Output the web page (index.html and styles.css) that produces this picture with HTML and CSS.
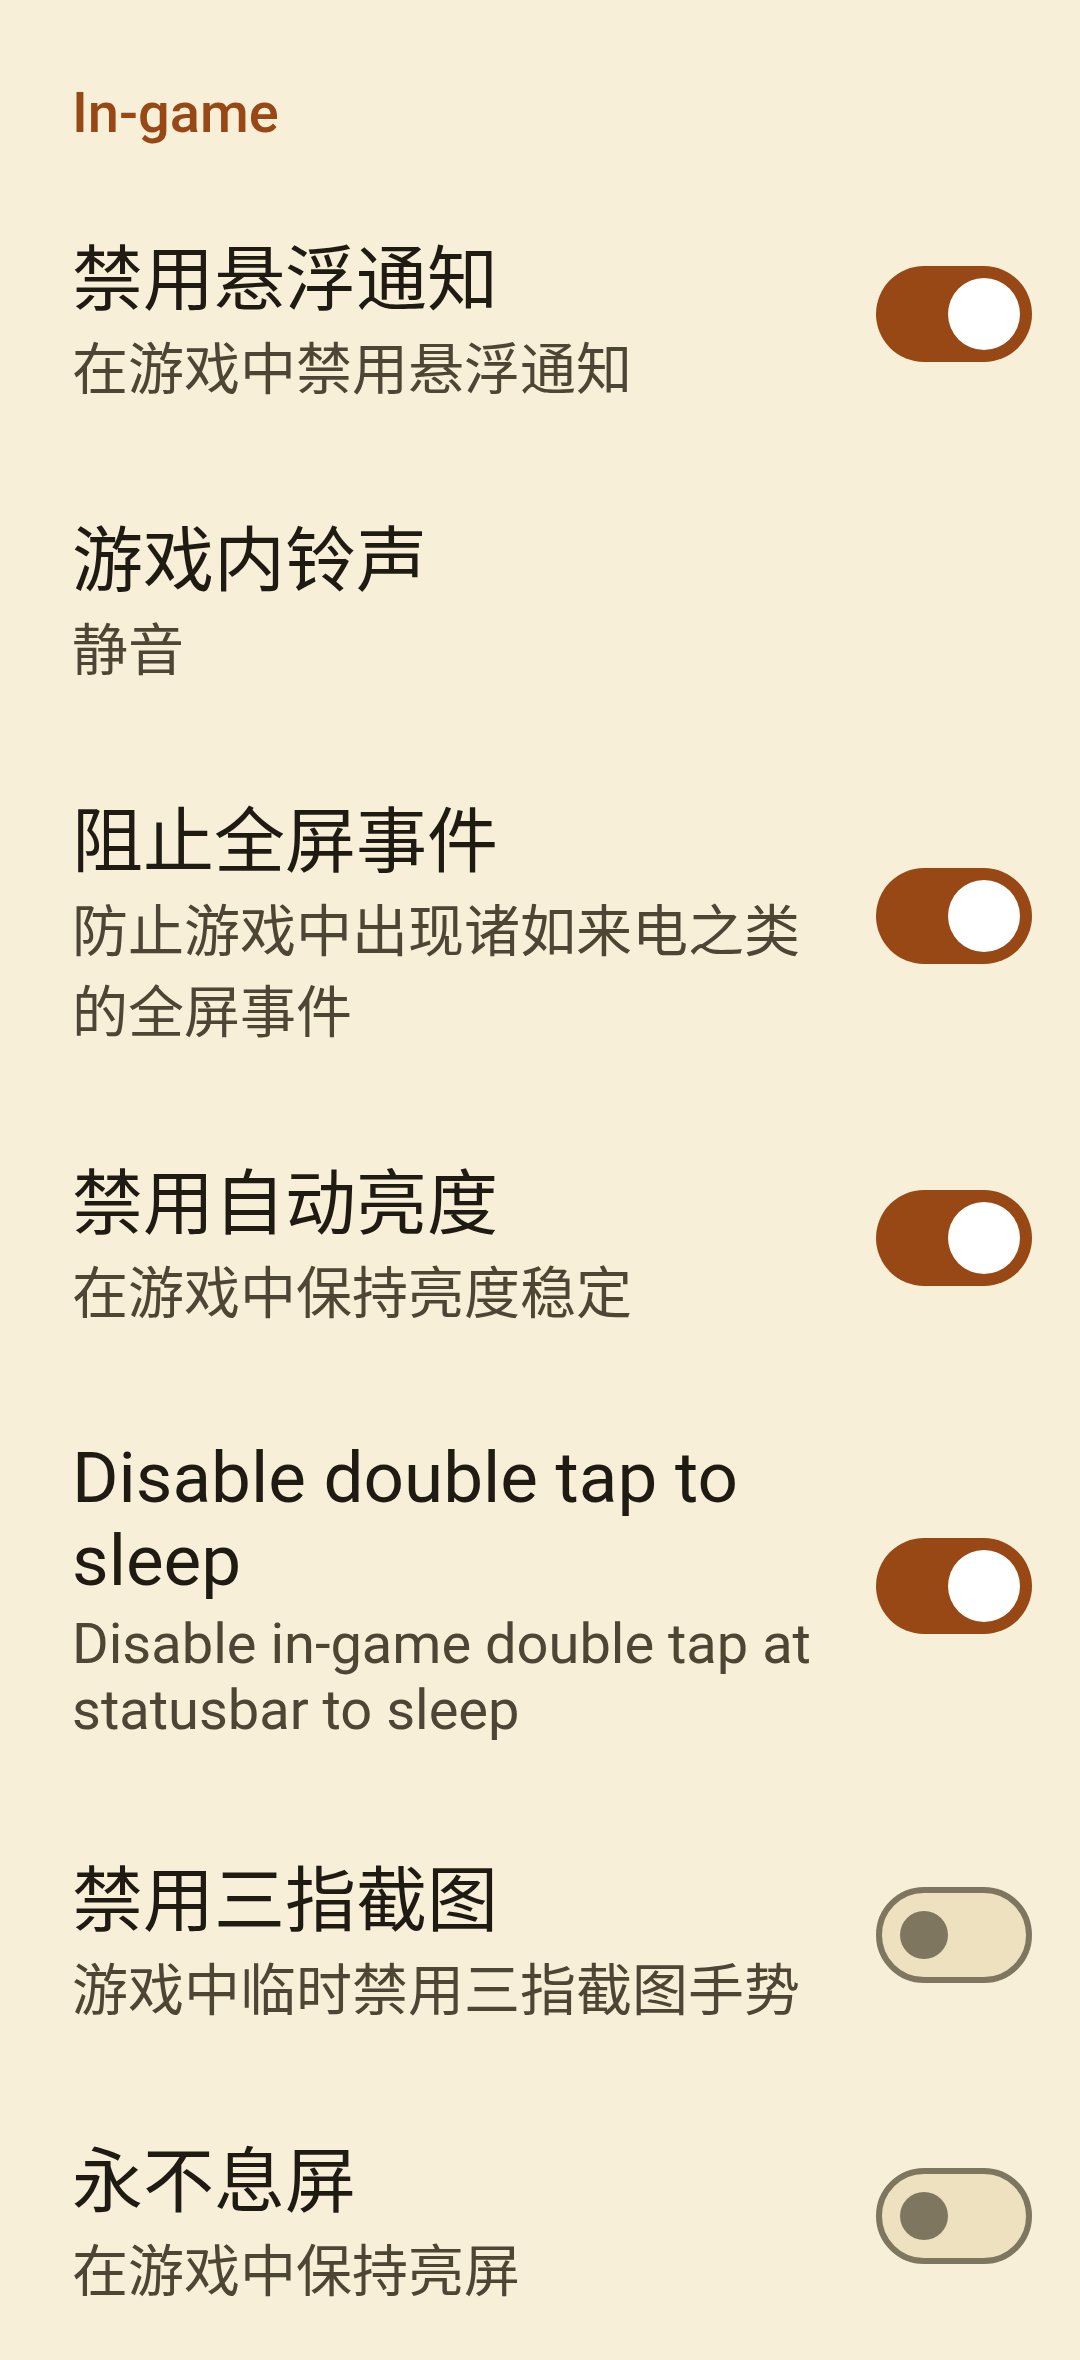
FILE: index.html
```html
<!DOCTYPE html>
<html lang="zh-CN">
<head>
<meta charset="utf-8">
<title>In-game</title>
<link rel="stylesheet" href="styles.css">
</head>
<body>
<div class="page">
  <div class="category">In-game</div>

  <div class="pref">
    <div class="text">
      <div class="title">禁用悬浮通知</div>
      <div class="summary">在游戏中禁用悬浮通知</div>
    </div>
    <div class="switch on"><div class="thumb"></div></div>
  </div>

  <div class="pref">
    <div class="text">
      <div class="title">游戏内铃声</div>
      <div class="summary">静音</div>
    </div>
  </div>

  <div class="pref">
    <div class="text">
      <div class="title">阻止全屏事件</div>
      <div class="summary">防止游戏中出现诸如来电之类的全屏事件</div>
    </div>
    <div class="switch on"><div class="thumb"></div></div>
  </div>

  <div class="pref">
    <div class="text">
      <div class="title">禁用自动亮度</div>
      <div class="summary">在游戏中保持亮度稳定</div>
    </div>
    <div class="switch on"><div class="thumb"></div></div>
  </div>

  <div class="pref">
    <div class="text">
      <div class="title latin">Disable double tap to sleep</div>
      <div class="summary latin">Disable in-game double tap at statusbar to sleep</div>
    </div>
    <div class="switch on"><div class="thumb"></div></div>
  </div>

  <div class="pref">
    <div class="text">
      <div class="title">禁用三指截图</div>
      <div class="summary">游戏中临时禁用三指截图手势</div>
    </div>
    <div class="switch off"><div class="thumb"></div></div>
  </div>

  <div class="pref">
    <div class="text">
      <div class="title">永不息屏</div>
      <div class="summary">在游戏中保持亮屏</div>
    </div>
    <div class="switch off"><div class="thumb"></div></div>
  </div>
</div>
</body>
</html>
```

FILE: styles.css
```css
html, body {
  margin: 0;
  padding: 0;
  background: #F8EFD8;
}

body {
  font-family: Roboto, "Noto Sans CJK SC", sans-serif;
  line-height: normal;
}

.page {
  display: flex;
  flex-direction: column;
  min-height: 2360px;
}

.category {
  padding: 80px 48px 27px 72px;
  font-size: 56px;
  font-weight: 500;
  color: #974814;
}

.pref {
  display: flex;
  align-items: center;
  gap: 48px;
  padding: 49px 48px 49px 72px;
}

.text {
  flex: 1;
  min-width: 0;
}

.title {
  font-size: 71px;
  color: #1F1B13;
}

.summary {
  font-size: 56px;
  color: #4D4635;
}

/* Latin-only lines carry the font's extra top/bottom padding */
.title.latin {
  padding-top: 9px;
  padding-bottom: 2px;
}

.summary.latin {
  padding-top: 7px;
  padding-bottom: 2px;
}

.switch {
  flex-shrink: 0;
  box-sizing: border-box;
  width: 156px;
  height: 96px;
  border-radius: 48px;
  display: flex;
  align-items: center;
}

.switch.on {
  background: #974814;
  justify-content: flex-end;
  padding: 0 12px;
}

.switch.on .thumb {
  width: 72px;
  height: 72px;
  border-radius: 50%;
  background: #FFFFFF;
}

.switch.off {
  background: #EDE1C0;
  border: 6px solid #7F7660;
  justify-content: flex-start;
  padding-left: 18px;
}

.switch.off .thumb {
  width: 48px;
  height: 48px;
  border-radius: 50%;
  background: #7F7660;
}
```
